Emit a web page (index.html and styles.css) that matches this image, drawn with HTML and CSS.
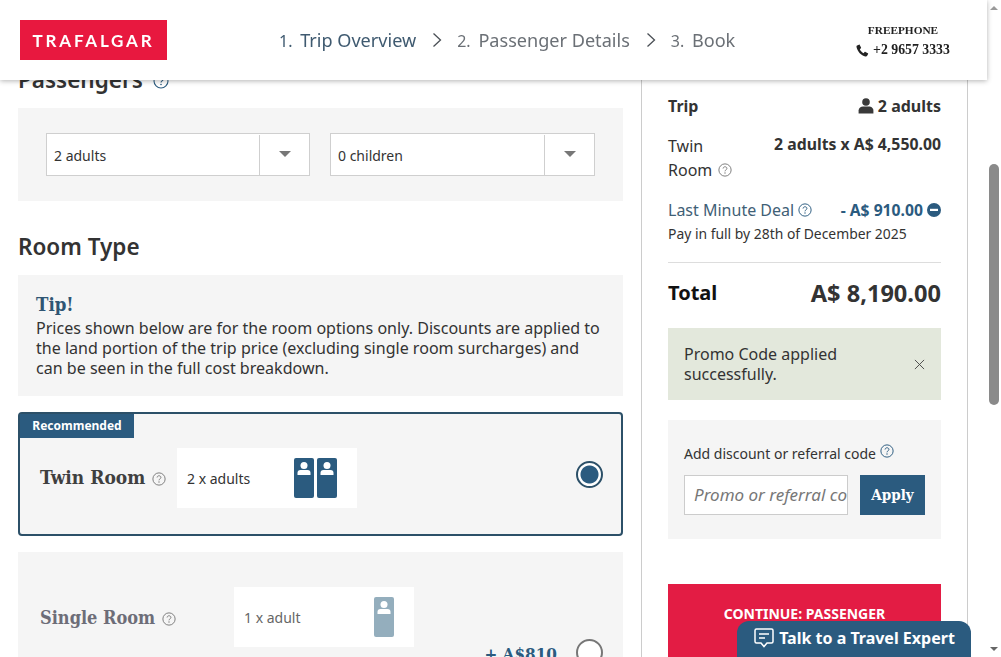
FILE: index.html
```html
<!DOCTYPE html>
<html lang="en">
<head>
<meta charset="UTF-8" />
<title>Trafalgar - Trip Overview</title>
<link rel="stylesheet" href="styles.css">
</head>
<body>

<header class="top-bar">
  <div class="logo"><span>TRAFALGAR</span></div>
  <nav class="steps">
    <span class="step active"><i>1.</i> Trip Overview</span>
    <svg class="chevron" viewBox="0 0 10 16"><path d="M1.5 1.5 8.5 8l-7 6.500" fill="none" stroke="#4a4f55" stroke-width="1.300"/></svg>
    <span class="step"><i>2.</i> Passenger Details</span>
    <svg class="chevron" viewBox="0 0 10 16"><path d="M1.5 1.5 8.5 8l-7 6.500" fill="none" stroke="#4a4f55" stroke-width="1.300"/></svg>
    <span class="step"><i>3.</i> Book</span>
  </nav>
  <div class="phone">
    <div class="phone-label">FREEPHONE</div>
    <div class="phone-num">
      <svg viewBox="0 0 16 16"><path d="M3.600.8 1.300 1.900C.6 2.300.5 3 .7 4c1.100 5.200 5.700 10.300 10.900 11.400 1 .2 1.700-.1 2.100-.8l1.200-2.300c.2-.4.100-.8-.3-1l-3-1.600c-.4-.2-.7-.1-1 .2L9.300 11.300C7.400 10.400 5.500 8.400 4.700 6.500L6 5.200c.3-.3.300-.6.200-1L4.600 1.100C4.400.7 4 .6 3.600.8Z" fill="#222"/></svg>
      +2 9657 3333
    </div>
  </div>
</header>

<div class="page">
  <main class="content">
    <h2 class="section-title">Passengers
      <svg class="help help-blue" viewBox="0 0 16 16"><use href="#help-icon"/></svg>
    </h2>
    <section class="panel pax-panel">
      <div class="fake-select"><span>2 adults</span><b></b></div>
      <div class="fake-select"><span>0 children</span><b></b></div>
    </section>

    <h2 class="section-title room-title">Room Type</h2>
    <section class="panel tip">
      <h3>Tip!</h3>
      <p>Prices shown below are for the room options only. Discounts are applied to the land portion of the trip price (excluding single room surcharges) and can be seen in the full cost breakdown.</p>
    </section>

    <section class="room selected">
      <div class="badge">Recommended</div>
      <div class="room-name">Twin Room
        <svg class="help" viewBox="0 0 16 16"><use href="#help-icon"/></svg>
      </div>
      <div class="occupancy">
        <span>2 x adults</span>
        <div class="doors">
          <svg class="door" viewBox="0 0 20 40"><use href="#door-icon"/></svg>
          <svg class="door" viewBox="0 0 20 40"><use href="#door-icon"/></svg>
        </div>
      </div>
      <div class="radio on"></div>
    </section>

    <section class="room single">
      <div class="room-name muted">Single Room
        <svg class="help" viewBox="0 0 16 16"><use href="#help-icon"/></svg>
      </div>
      <div class="occupancy">
        <span class="muted-text">1 x adult</span>
        <div class="doors">
          <svg class="door pale" viewBox="0 0 20 40"><use href="#door-icon"/></svg>
        </div>
      </div>
      <div class="room-price">+ A$810</div>
      <div class="radio"></div>
    </section>
  </main>

  <aside class="summary">
    <div class="row trip-row">
      <strong>Trip</strong>
      <strong class="adults">
        <svg viewBox="0 0 16 16"><circle cx="8" cy="4" r="3.800" fill="#3a3a3a"/><path d="M.6 15.500v-3C.6 10 3 8.500 5 8.500h6c2 0 4.400 1.500 4.400 4v3Z" fill="#3a3a3a"/></svg>
        2 adults
      </strong>
    </div>
    <div class="row twin-row">
      <div class="twin-label">Twin Room <svg class="help" viewBox="0 0 16 16"><use href="#help-icon"/></svg></div>
      <strong>2 adults x A$ 4,550.00</strong>
    </div>
    <div class="row deal-row">
      <div>Last Minute Deal <svg class="help help-blue" viewBox="0 0 16 16"><use href="#help-icon"/></svg></div>
      <strong class="deal-amount">- A$ 910.00 <svg viewBox="0 0 14 14"><circle cx="7" cy="7" r="7" fill="#2b5b7f"/><rect x="3" y="5.800" width="8" height="2.200" fill="#fff"/></svg></strong>
    </div>
    <div class="pay-by">Pay in full by 28th of December 2025</div>
    <div class="row total-row">
      <strong class="total-label">Total</strong>
      <strong class="total-amount">A$ 8,190.00</strong>
    </div>
    <div class="promo-ok">
      <span>Promo Code applied successfully.</span>
      <svg viewBox="0 0 12 12"><path d="M1 1l10 10M11 1 1 11" stroke="#444" stroke-width="1"/></svg>
    </div>
    <div class="discount">
      <div class="discount-label">Add discount or referral code <svg class="help help-blue" viewBox="0 0 16 16"><use href="#help-icon"/></svg></div>
      <div class="discount-form">
        <div class="promo-input"><span>Promo or referral code</span></div>
        <button class="apply">Apply</button>
      </div>
    </div>
    <button class="continue">CONTINUE: PASSENGER DETAILS</button>
  </aside>
</div>

<button class="chat">
  <svg viewBox="0 0 22 22"><path d="M3.500 2h15A1.500 1.500 0 0 1 20 3.500v11a1.500 1.500 0 0 1-1.500 1.500H14l-3 3.500L8 16H3.500A1.500 1.500 0 0 1 2 14.500v-11A1.500 1.500 0 0 1 3.500 2Z" fill="none" stroke="#fff" stroke-width="1.500"/><path d="M6 7h10M6 11h6" stroke="#fff" stroke-width="1.500"/></svg>
  Talk to a Travel Expert
</button>

<div class="scrollbar">
  <div class="arrow-up"></div>
  <div class="thumb"></div>
  <div class="arrow-down"></div>
</div>

<svg class="defs" width="0" height="0">
  <symbol id="help-icon" viewBox="0 0 16 16">
    <circle cx="8" cy="8" r="7" fill="none" stroke="currentColor" stroke-width="1.100"/>
    <path d="M5.800 6.300C5.900 5 6.900 4.300 8 4.300c1.200 0 2.200.8 2.200 1.900 0 1.700-2.200 1.600-2.200 3.300" fill="none" stroke="currentColor" stroke-width="1.100"/>
    <circle cx="8" cy="11.500" r=".8" fill="currentColor"/>
  </symbol>
  <symbol id="door-icon" viewBox="0 0 20 40">
    <rect width="20" height="40" rx="2" fill="currentColor"/>
    <circle cx="10" cy="7.500" r="3.500" fill="#fff"/>
    <path d="M3.500 17v-2c0-2 1-3 3-3h7c2 0 3 1 3 3v2Z" fill="#fff"/>
  </symbol>
</svg>

</body>
</html>
```

FILE: styles.css
```css
html, body {
  margin: 0;
  height: 657px;
  overflow: hidden;
}

body {
  background: #fff;
  color: #333;
  font-family: "Noto Sans", "Open Sans", sans-serif;
  font-size: 16px;
}

.defs {
  position: absolute;
}

/* header */
.top-bar {
  position: fixed;
  top: 0;
  left: 0;
  width: 987px;
  height: 80px;
  box-sizing: border-box;
  padding: 20px 34px 20px 20px;
  background: #fff;
  box-shadow: 0 1px 5px rgba(0, 0, 0, 0.3);
  display: flex;
  align-items: center;
  z-index: 5;
}

.logo {
  width: 147px;
  height: 40px;
  background: #e8183f;
  color: #fff;
  display: flex;
  align-items: center;
  justify-content: center;
  font-family: "Lato", sans-serif;
  font-weight: 700;
  font-size: 17px;
  letter-spacing: 2.800px;
}

.steps {
  flex: 1;
  display: flex;
  align-items: center;
  padding-left: 112px;
  font-size: 18.100px;
  color: #6b7076;
}

.step i {
  font-style: normal;
  font-size: 16px;
  margin-right: 3px;
}

.step.active {
  color: #3f5a70;
}

.chevron {
  width: 10px;
  height: 16px;
  margin: 0 15px 0 16px;
}

.phone {
  width: 100px;
  text-align: center;
  font-family: "Liberation Serif", serif;
  font-weight: 700;
  color: #222;
  line-height: 20px;
}

.phone-label {
  font-size: 11.300px;
}

.phone-num {
  font-size: 13.800px;
  display: flex;
  align-items: center;
  justify-content: center;
  gap: 4px;
}

.phone-num svg {
  width: 13px;
  height: 13px;
}

/* page columns */
.page {
  display: flex;
  align-items: flex-start;
  padding-left: 18px;
}

.content {
  width: 605px;
  padding-top: 66px;
}

.section-title {
  margin: 0;
  font-size: 22.500px;
  line-height: 28px;
  font-weight: 600;
  color: #333;
}

.help {
  width: 14px;
  height: 14px;
  color: #7b7b7b;
  vertical-align: -1px;
}

.help-blue {
  color: #2b5b7f;
}

.section-title .help {
  width: 16px;
  height: 16px;
  margin-left: 4px;
  vertical-align: -1px;
}

.panel {
  background: #f5f5f5;
}

.pax-panel {
  margin-top: 14px;
  height: 93px;
  box-sizing: border-box;
  padding: 25px 28px;
  display: flex;
  gap: 20px;
}

.fake-select {
  width: 264px;
  height: 43px;
  box-sizing: border-box;
  background: #fff;
  border: 1px solid #cfcfcf;
  display: flex;
  align-items: center;
  font-size: 14px;
  padding: 1px 0 0 7px;
}

.fake-select:last-child {
  width: 265px;
}

.fake-select span {
  flex: 1;
}

.fake-select b {
  width: 49px;
  height: 100%;
  border-left: 1px solid #cfcfcf;
  display: flex;
  align-items: center;
  justify-content: center;
}

.fake-select b::after {
  content: '';
  border-left: 6px solid transparent;
  border-right: 6px solid transparent;
  border-top: 6px solid #777;
  margin-top: -3px;
}

.room-title {
  margin-top: 32px;
}

.tip {
  margin-top: 14px;
  height: 121px;
  box-sizing: border-box;
  padding: 19px 18px 0;
}

.tip h3 {
  margin: 0;
  font-family: "DejaVu Serif Condensed", "DejaVu Serif", serif;
  font-size: 18.500px;
  line-height: 22px;
  color: #2f5573;
}

.tip p {
  margin: 2px 0 0;
  font-size: 16.060px;
  line-height: 20px;
}

.room {
  background: #f5f5f5;
  box-sizing: border-box;
  height: 124px;
  display: flex;
  align-items: flex-start;
  position: relative;
}

.room.selected {
  margin-top: 16px;
  border: 2px solid #2c5068;
  border-radius: 4px;
  padding: 34px 18px 0 20px;
}

.room.single {
  margin-top: 16px;
  height: 200px;
  padding: 35px 20px 0 22px;
}

.badge {
  position: absolute;
  top: 0;
  left: 0;
  width: 114px;
  height: 24px;
  background: #2b5b7f;
  color: #fff;
  font-size: 12px;
  font-weight: 700;
  line-height: 24px;
  text-align: center;
}

.room-name {
  width: 137px;
  font-family: "DejaVu Serif Condensed", "DejaVu Serif", serif;
  font-weight: 700;
  font-size: 19px;
  color: #3f3f3f;
  padding-top: 18px;
  white-space: nowrap;
}

.room-name .help {
  margin-left: 1px;
  vertical-align: -2px;
}

.room-name.muted {
  width: 194px;
  font-size: 18px;
  color: #6d6d78;
  padding-top: 20px;
}

.occupancy {
  width: 180px;
  height: 60px;
  background: #fff;
  box-sizing: border-box;
  padding: 0 20px 0 10px;
  display: flex;
  align-items: center;
  justify-content: space-between;
  font-size: 14px;
}

.muted-text {
  color: #666;
}

.doors {
  display: flex;
  gap: 3px;
}

.door {
  width: 20px;
  height: 40px;
  color: #2b5b7f;
}

.door.pale {
  color: #94aebd;
}

.radio {
  width: 27px;
  height: 27px;
  box-sizing: border-box;
  border: 2px solid #777;
  border-radius: 50%;
  background: #fff;
  margin-left: auto;
  margin-top: 13px;
}

.radio.on {
  border-color: #2c5068;
  background: radial-gradient(circle, #2b5b7f 0 8.500px, #fff 9.500px);
}

.single .radio {
  margin: 52px 0 0 19px;
}

.room-price {
  margin-left: auto;
  margin-top: 57px;
  font-family: "DejaVu Serif Condensed", "DejaVu Serif", serif;
  font-weight: 700;
  font-size: 17px;
  color: #2b5b7f;
}

/* sidebar */
.summary {
  margin-left: 18px;
  width: 327px;
  height: 657px;
  box-sizing: border-box;
  padding: 94px 26px 0 26px;
  border-left: 1px solid #ccc;
  border-right: 1px solid #ccc;
  font-size: 16px;
}

.row {
  display: flex;
  justify-content: space-between;
}

.trip-row {
  line-height: 24px;
}

.adults svg {
  width: 16px;
  height: 16px;
  vertical-align: -2px;
}

.twin-row {
  margin-top: 16px;
  line-height: 24px;
  align-items: flex-start;
}

.twin-row strong {
  font-size: 15.800px;
  white-space: nowrap;
  margin-top: -2px;
}

.twin-label {
  width: 70px;
}

.twin-label .help {
  margin-left: 2px;
}

.deal-row {
  margin-top: 16px;
  line-height: 24px;
  color: #3f6076;
  white-space: nowrap;
}

.deal-amount {
  color: #2b5b7f;
  font-size: 15.700px;
}

.deal-amount svg {
  width: 14px;
  height: 14px;
  vertical-align: -1px;
}

.pay-by {
  font-size: 13.900px;
  line-height: 24px;
  padding-bottom: 16px;
  border-bottom: 1px solid #ddd;
}

.total-row {
  margin-top: 15px;
  align-items: center;
  line-height: 30px;
}

.total-label {
  font-size: 20px;
  color: #111;
}

.total-amount {
  font-size: 23.600px;
  color: #333;
}

.promo-ok {
  margin-top: 20px;
  height: 72px;
  box-sizing: border-box;
  padding: 16px;
  background: #e3e8dc;
  display: flex;
  justify-content: space-between;
  align-items: center;
  line-height: 20px;
}

.promo-ok span {
  width: 190px;
}

.promo-ok svg {
  width: 11px;
  height: 11px;
}

.discount {
  margin-top: 20px;
  height: 119px;
  box-sizing: border-box;
  padding: 24px 16px 0;
  background: #f5f5f5;
}

.discount-label {
  font-size: 14px;
  line-height: 20px;
}

.discount-label .help {
  vertical-align: 1px;
}

.discount-form {
  display: flex;
  gap: 12px;
  margin-top: 11px;
}

.promo-input {
  width: 164px;
  height: 40px;
  box-sizing: border-box;
  background: #fff;
  border: 1px solid #ccc;
  padding-left: 9px;
  font-size: 17px;
  font-style: italic;
  color: #777;
  line-height: 38px;
  overflow: hidden;
  white-space: nowrap;
}

.promo-input span {
  display: block;
  width: 154px;
  overflow: hidden;
}

.apply {
  width: 65px;
  height: 40px;
  border: none;
  background: #2b5b7f;
  color: #fff;
  font-family: "DejaVu Serif Condensed", "DejaVu Serif", serif;
  font-weight: 700;
  font-size: 15px;
  padding: 0;
}

.continue {
  display: block;
  margin-top: 45px;
  width: 273px;
  height: 90px;
  border: none;
  background: #e31c44;
  color: #fff;
  font-family: "Noto Sans", sans-serif;
  font-weight: 700;
  font-size: 14px;
  line-height: 20px;
  padding: 20px 40px 30px;
}

.chat {
  position: fixed;
  left: 737px;
  top: 621px;
  width: 234px;
  height: 36px;
  border: none;
  border-radius: 12px 12px 0 0;
  background: #2b5b7f;
  color: #fff;
  font-family: "Noto Sans", sans-serif;
  font-weight: 700;
  font-size: 16px;
  display: flex;
  align-items: center;
  justify-content: center;
  gap: 4px;
  padding: 0 0 2px;
  z-index: 6;
}

.chat svg {
  width: 22px;
  height: 22px;
}

/* scrollbar */
.scrollbar {
  position: fixed;
  top: 0;
  right: 0;
  width: 14px;
  height: 657px;
}

.thumb {
  position: absolute;
  top: 164px;
  left: 2px;
  width: 10px;
  height: 241px;
  background: #8a8a8a;
  border-radius: 5px;
}

.arrow-up, .arrow-down {
  position: absolute;
  left: 3px;
  border-left: 4px solid transparent;
  border-right: 4px solid transparent;
}

.arrow-up {
  top: 6px;
  border-bottom: 4px solid #9a9a9a;
}

.arrow-down {
  bottom: 6px;
  border-top: 4px solid #666;
}
```
